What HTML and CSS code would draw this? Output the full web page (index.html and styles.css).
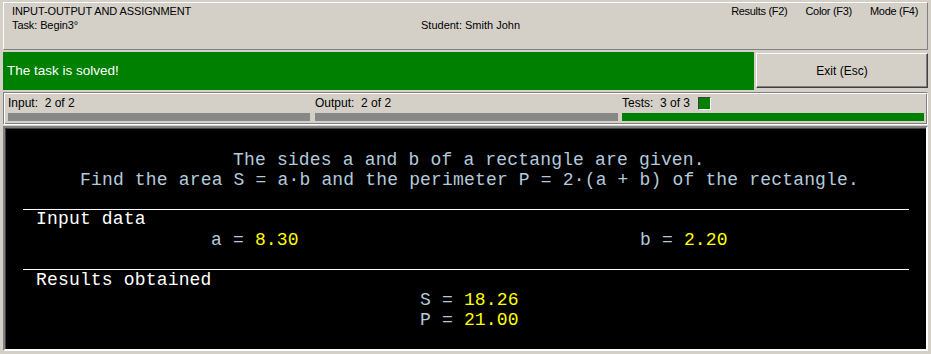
FILE: index.html
```html
<!DOCTYPE html>
<html>
<head>
<meta charset="utf-8">
<link rel="stylesheet" href="styles.css">
</head>
<body>
<div class="app">
  <header class="header">
    <div class="hcol-left">
      <div class="hline">INPUT-OUTPUT AND ASSIGNMENT</div>
      <div class="hline">Task: Begin3°</div>
    </div>
    <div class="hcol-mid">
      <div class="hline">&nbsp;</div>
      <div class="hline">Student: Smith John</div>
    </div>
    <nav class="menu">
      <span>Results (F2)</span>
      <span>Color (F3)</span>
      <span>Mode (F4)</span>
    </nav>
  </header>

  <div class="result-row">
    <div class="solved">The task is solved!</div>
    <div class="exit">Exit (Esc)</div>
  </div>

  <div class="status">
    <div class="scol c1">
      <div class="slabel">Input:&nbsp; 2 of 2</div>
      <div class="bar gray"></div>
    </div>
    <div class="scol c2">
      <div class="slabel">Output:&nbsp; 2 of 2</div>
      <div class="bar gray"></div>
    </div>
    <div class="scol c3">
      <div class="slabel">Tests:&nbsp; 3 of 3 <span class="ind"></span></div>
      <div class="bar green"></div>
    </div>
  </div>

  <div class="console">
    <div class="tline t1">The sides a and b of a rectangle are given.</div>
    <div class="tline t2">Find the area S = a·b and the perimeter P = 2·(a + b) of the rectangle.</div>
    <div class="rule r1"></div>
    <div class="section-title st1">Input data</div>
    <div class="datarow dr1"><span class="cell-a">a = <span class="val">8.30</span></span><span>b = <span class="val">2.20</span></span></div>
    <div class="rule r2"></div>
    <div class="section-title st2">Results obtained</div>
    <div class="resrow rr1">S = <span class="val">18.26</span></div>
    <div class="resrow">P = <span class="val">21.00</span></div>
  </div>
</div>
</body>
</html>
```
FILE: styles.css
```css
html, body {
  margin: 0;
  padding: 0;
  background: #d4d0c8;
}
body {
  width: 931px;
  height: 354px;
  overflow: hidden;
  font-family: "Liberation Sans", Arial, sans-serif;
  color: #000;
}
.app {
  display: flex;
  flex-direction: column;
  padding: 2px 3px 0 3px;
  box-sizing: border-box;
  height: 354px;
}
.header {
  box-sizing: border-box;
  height: 48px;
  border: 1px solid;
  border-color: #ffffff #808080 #808080 #ffffff;
  display: flex;
  align-items: flex-start;
  padding: 1px 9px 0 8px;
  font-size: 11px;
}
.hline {
  line-height: 14px;
  height: 14px;
  white-space: nowrap;
}
.hcol-left {
  width: 409px;
  letter-spacing: -0.1px;
}
.menu {
  margin-left: auto;
  display: flex;
  gap: 18px;
  line-height: 14px;
  letter-spacing: -0.3px;
}
.result-row {
  display: flex;
  margin-top: 2px;
  height: 38px;
}
.solved {
  width: 751px;
  background: #008000;
  color: #ffffff;
  font-size: 13.5px;
  line-height: 38px;
  padding-left: 4px;
  box-sizing: border-box;
}
.exit {
  flex: 1;
  margin: 1px 0 2px 2px;
  box-sizing: border-box;
  border: 1px solid;
  border-color: #ffffff #404040 #404040 #ffffff;
  box-shadow: inset -1px -1px 0 #808080;
  display: flex;
  align-items: center;
  justify-content: center;
  font-size: 12px;
}
.status {
  margin-top: 2px;
  height: 33px;
  box-sizing: border-box;
  border: 1px solid;
  border-color: #808080 #ffffff #ffffff #808080;
  box-shadow: inset 1px 1px 0 #ffffff, inset -1px -1px 0 #808080;
  display: grid;
  grid-template-columns: 307px 307px 1fr;
  padding: 3px 3px 0 4px;
}
.slabel {
  font-size: 12px;
  line-height: 14px;
  height: 14px;
  white-space: nowrap;
  display: flex;
  align-items: center;
}
.bar {
  height: 8px;
  margin-top: 3px;
}
.c1 .bar { margin-right: 5px; }
.c2 .bar { margin-right: 4px; }
.bar.gray { background: #888888; }
.bar.green { background: #008000; }
.ind {
  display: inline-block;
  width: 11px;
  height: 11px;
  margin-left: 8px;
  background: #008000;
  border: 1px solid;
  border-color: #404040 #ffffff #ffffff #404040;
}
.console {
  margin-top: 1px;
  height: 225px;
  box-sizing: border-box;
  background: #000000;
  border: 2px solid;
  border-color: #808080 #ffffff #ffffff #808080;
  box-shadow: inset 1px 1px 0 #404040;
  padding-top: 22px;
  font-family: "Liberation Mono", "Courier New", monospace;
  font-size: 18px;
  letter-spacing: 0.17px;
  color: #b4cadb;
}
.tline, .section-title, .datarow, .resrow {
  white-space: pre;
  line-height: 20px;
  height: 20px;
}
.t1 { padding-left: 228px; }
.t2 { padding-left: 75px; }
.rule {
  height: 1px;
  background: #ffffff;
  margin-left: 18px;
  width: 886px;
}
.r1 { margin-top: 19px; }
.section-title {
  color: #ffffff;
  padding-left: 31px;
}
.st1 { margin-top: -1px; }
.dr1 {
  margin-top: 1px;
  padding-left: 206px;
  display: flex;
}
.cell-a {
  width: 429px;
}
.val { color: #ffff00; }
.r2 { margin-top: 19px; }
.st2 { margin-top: 0; }
.resrow { padding-left: 415px; }
```
